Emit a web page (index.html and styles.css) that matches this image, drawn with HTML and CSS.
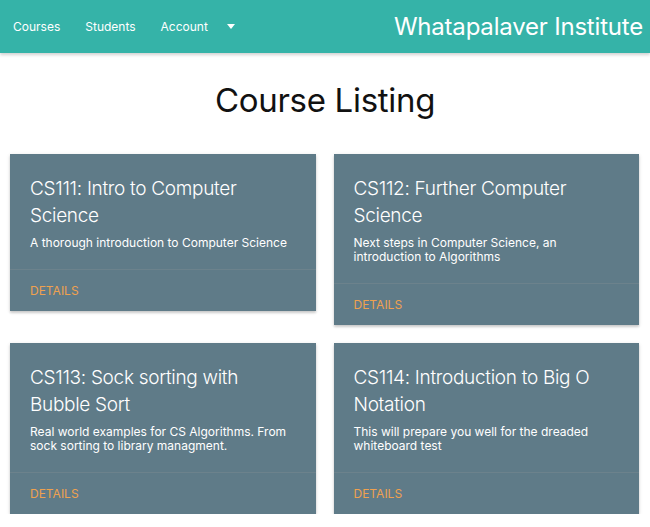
FILE: index.html
```html
<!DOCTYPE html>
<html>
<head>
<meta charset="utf-8">
<link rel="stylesheet" href="styles.css">
</head>
<body>
<nav class="navbar">
  <ul class="nav-links">
    <li>Courses</li>
    <li>Students</li>
    <li class="dropdown">Account <span class="caret"></span></li>
  </ul>
  <div class="brand">Whatapalaver Institute</div>
</nav>
<main>
  <h1 class="page-title">Course Listing</h1>
  <div class="grid">
    <div class="card">
      <div class="card-content">
        <h2 class="card-title">CS111: Intro to Computer Science</h2>
        <p class="card-desc">A thorough introduction to Computer Science</p>
      </div>
      <div class="card-action">DETAILS</div>
    </div>
    <div class="card">
      <div class="card-content">
        <h2 class="card-title">CS112: Further Computer Science</h2>
        <p class="card-desc">Next steps in Computer Science, an introduction to Algorithms</p>
      </div>
      <div class="card-action">DETAILS</div>
    </div>
    <div class="card">
      <div class="card-content">
        <h2 class="card-title">CS113: Sock sorting with Bubble Sort</h2>
        <p class="card-desc">Real world examples for CS Algorithms. From sock sorting to library managment.</p>
      </div>
      <div class="card-action">DETAILS</div>
    </div>
    <div class="card">
      <div class="card-content">
        <h2 class="card-title">CS114: Introduction to Big O Notation</h2>
        <p class="card-desc">This will prepare you well for the dreaded whiteboard test</p>
      </div>
      <div class="card-action">DETAILS</div>
    </div>
  </div>
</main>
</body>
</html>
```
FILE: styles.css
```css
* { box-sizing: border-box; }
body {
  margin: 0;
  font-family: Inter, "Noto Sans", sans-serif;
  background: #fff;
  color: #111;
}
.navbar {
  height: 53px;
  background: #35b3a8;
  display: flex;
  align-items: center;
  justify-content: space-between;
  padding: 0 7px 0 13px;
  box-shadow: 0 2px 3px rgba(0,0,0,0.18);
  color: #fff;
}
.nav-links {
  list-style: none;
  margin: 0;
  padding: 0;
  display: flex;
  gap: 25px;
  font-size: 12px;
}
.dropdown {
  display: flex;
  align-items: center;
  gap: 19px;
}
.caret {
  width: 0;
  height: 0;
  border-left: 4.5px solid transparent;
  border-right: 4.5px solid transparent;
  border-top: 5px solid #fff;
}
.brand {
  font-size: 24px;
  font-weight: 400;
  letter-spacing: -0.2px;
}
.page-title {
  margin: 26px 0 0;
  text-align: center;
  font-size: 33px;
  font-weight: 400;
  line-height: 42px;
  letter-spacing: -0.3px;
}
.grid {
  display: grid;
  grid-template-columns: 1fr 1fr;
  column-gap: 18px;
  row-gap: 18px;
  padding: 33px 11px 0 10px;
  align-items: start;
}
.card {
  background: #5f7b88;
  box-shadow: 0 2px 2px rgba(0,0,0,0.14), 0 1px 4px rgba(0,0,0,0.12);
  color: #fff;
}
.card-content {
  padding: 21px 20px 19px 20px;
}
.card-title {
  margin: 0 0 7px;
  font-size: 19px;
  font-weight: 300;
  line-height: 27px;
  letter-spacing: -0.3px;
}
.card-desc {
  margin: 0;
  font-size: 12px;
  line-height: 14px;
}
.card-action {
  border-top: 1px solid rgba(160,160,160,0.2);
  padding: 0 20px;
  height: 42px;
  display: flex;
  align-items: center;
  color: #efa14f;
  font-size: 12px;
}
```
